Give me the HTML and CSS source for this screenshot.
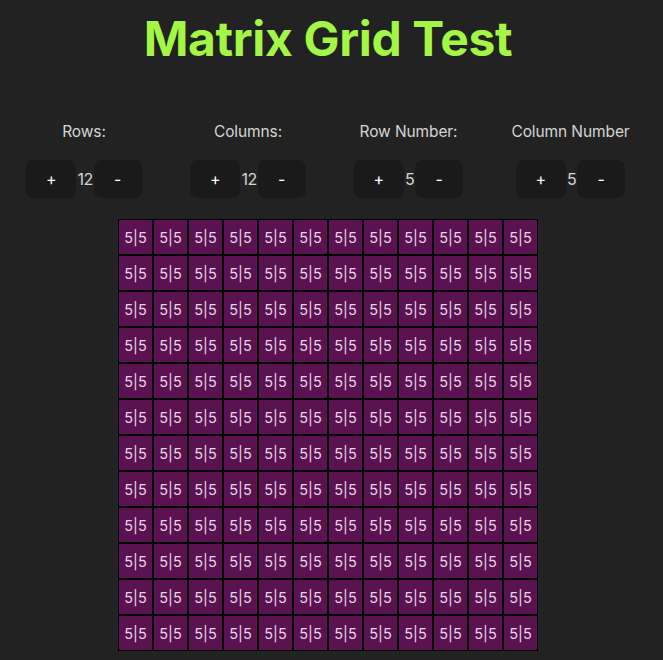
FILE: index.html
```html
<!DOCTYPE html>
<html>
<head>
<meta charset="utf-8">
<link rel="stylesheet" href="styles.css">
</head>
<body>
<div class="page">
  <h1 class="title">Matrix Grid Test</h1>
  <div class="controls">
    <div class="control c1">
      <div class="label">Rows:</div>
      <div class="stepper"><button class="btn plus">+</button><span class="value">12</span><button class="btn minus">-</button></div>
    </div>
    <div class="control c2">
      <div class="label">Columns:</div>
      <div class="stepper"><button class="btn plus">+</button><span class="value">12</span><button class="btn minus">-</button></div>
    </div>
    <div class="control c3">
      <div class="label">Row Number:</div>
      <div class="stepper"><button class="btn plus">+</button><span class="value">5</span><button class="btn minus">-</button></div>
    </div>
    <div class="control c4">
      <div class="label">Column Number</div>
      <div class="stepper"><button class="btn plus">+</button><span class="value">5</span><button class="btn minus">-</button></div>
    </div>
  </div>
  <div class="grid">
    <div class="cell">5|5</div><div class="cell">5|5</div><div class="cell">5|5</div><div class="cell">5|5</div><div class="cell">5|5</div><div class="cell">5|5</div><div class="cell">5|5</div><div class="cell">5|5</div><div class="cell">5|5</div><div class="cell">5|5</div><div class="cell">5|5</div><div class="cell">5|5</div>
    <div class="cell">5|5</div><div class="cell">5|5</div><div class="cell">5|5</div><div class="cell">5|5</div><div class="cell">5|5</div><div class="cell">5|5</div><div class="cell">5|5</div><div class="cell">5|5</div><div class="cell">5|5</div><div class="cell">5|5</div><div class="cell">5|5</div><div class="cell">5|5</div>
    <div class="cell">5|5</div><div class="cell">5|5</div><div class="cell">5|5</div><div class="cell">5|5</div><div class="cell">5|5</div><div class="cell">5|5</div><div class="cell">5|5</div><div class="cell">5|5</div><div class="cell">5|5</div><div class="cell">5|5</div><div class="cell">5|5</div><div class="cell">5|5</div>
    <div class="cell">5|5</div><div class="cell">5|5</div><div class="cell">5|5</div><div class="cell">5|5</div><div class="cell">5|5</div><div class="cell">5|5</div><div class="cell">5|5</div><div class="cell">5|5</div><div class="cell">5|5</div><div class="cell">5|5</div><div class="cell">5|5</div><div class="cell">5|5</div>
    <div class="cell">5|5</div><div class="cell">5|5</div><div class="cell">5|5</div><div class="cell">5|5</div><div class="cell">5|5</div><div class="cell">5|5</div><div class="cell">5|5</div><div class="cell">5|5</div><div class="cell">5|5</div><div class="cell">5|5</div><div class="cell">5|5</div><div class="cell">5|5</div>
    <div class="cell">5|5</div><div class="cell">5|5</div><div class="cell">5|5</div><div class="cell">5|5</div><div class="cell">5|5</div><div class="cell">5|5</div><div class="cell">5|5</div><div class="cell">5|5</div><div class="cell">5|5</div><div class="cell">5|5</div><div class="cell">5|5</div><div class="cell">5|5</div>
    <div class="cell">5|5</div><div class="cell">5|5</div><div class="cell">5|5</div><div class="cell">5|5</div><div class="cell">5|5</div><div class="cell">5|5</div><div class="cell">5|5</div><div class="cell">5|5</div><div class="cell">5|5</div><div class="cell">5|5</div><div class="cell">5|5</div><div class="cell">5|5</div>
    <div class="cell">5|5</div><div class="cell">5|5</div><div class="cell">5|5</div><div class="cell">5|5</div><div class="cell">5|5</div><div class="cell">5|5</div><div class="cell">5|5</div><div class="cell">5|5</div><div class="cell">5|5</div><div class="cell">5|5</div><div class="cell">5|5</div><div class="cell">5|5</div>
    <div class="cell">5|5</div><div class="cell">5|5</div><div class="cell">5|5</div><div class="cell">5|5</div><div class="cell">5|5</div><div class="cell">5|5</div><div class="cell">5|5</div><div class="cell">5|5</div><div class="cell">5|5</div><div class="cell">5|5</div><div class="cell">5|5</div><div class="cell">5|5</div>
    <div class="cell">5|5</div><div class="cell">5|5</div><div class="cell">5|5</div><div class="cell">5|5</div><div class="cell">5|5</div><div class="cell">5|5</div><div class="cell">5|5</div><div class="cell">5|5</div><div class="cell">5|5</div><div class="cell">5|5</div><div class="cell">5|5</div><div class="cell">5|5</div>
    <div class="cell">5|5</div><div class="cell">5|5</div><div class="cell">5|5</div><div class="cell">5|5</div><div class="cell">5|5</div><div class="cell">5|5</div><div class="cell">5|5</div><div class="cell">5|5</div><div class="cell">5|5</div><div class="cell">5|5</div><div class="cell">5|5</div><div class="cell">5|5</div>
    <div class="cell">5|5</div><div class="cell">5|5</div><div class="cell">5|5</div><div class="cell">5|5</div><div class="cell">5|5</div><div class="cell">5|5</div><div class="cell">5|5</div><div class="cell">5|5</div><div class="cell">5|5</div><div class="cell">5|5</div><div class="cell">5|5</div><div class="cell">5|5</div>
  </div>
</div>
</body>
</html>
```
FILE: styles.css
```css
html, body {
  margin: 0;
  padding: 0;
  background: #222222;
}
body {
  font-family: Inter, "Liberation Sans", sans-serif;
  color: rgba(255, 255, 255, 0.82);
  height: 660px;
  overflow: hidden;
}
.page {
  width: 656px;
  display: flex;
  flex-direction: column;
  align-items: center;
}
.title {
  margin: 10px 0 0 0;
  font-size: 48px;
  line-height: 58px;
  font-weight: 700;
  color: #a3f546;
  letter-spacing: -0.35px;
}
.controls {
  margin-top: 54px;
  display: grid;
  grid-template-columns: 115px 115px 108px 118px;
  column-gap: 49px;
}
.control {
  display: flex;
  flex-direction: column;
  align-items: center;
}
.label {
  font-size: 15.5px;
  line-height: 20px;
  white-space: nowrap;
  letter-spacing: -0.1px;
}
.stepper {
  margin-top: 18px;
  display: flex;
  align-items: center;
}
.btn {
  height: 38px;
  border: 1px solid transparent;
  border-radius: 8px;
  background: #1a1a1a;
  color: #ffffff;
  font-family: Inter, "Liberation Sans", sans-serif;
  font-size: 16px;
  padding: 0;
}
.plus { width: 50px; }
.minus { width: 48px; }
.value {
  font-size: 16px;
  line-height: 20px;
  letter-spacing: -0.5px;
  padding: 0 1px;
}
.grid {
  margin-top: 21px;
  display: grid;
  grid-template-columns: repeat(12, 35px);
  grid-auto-rows: 36px;
}
.cell {
  box-sizing: border-box;
  border: 1px solid #000000;
  background: #5a1350;
  color: #e8d4e6;
  font-size: 14.5px;
  display: flex;
  align-items: center;
  justify-content: center;
}
```
